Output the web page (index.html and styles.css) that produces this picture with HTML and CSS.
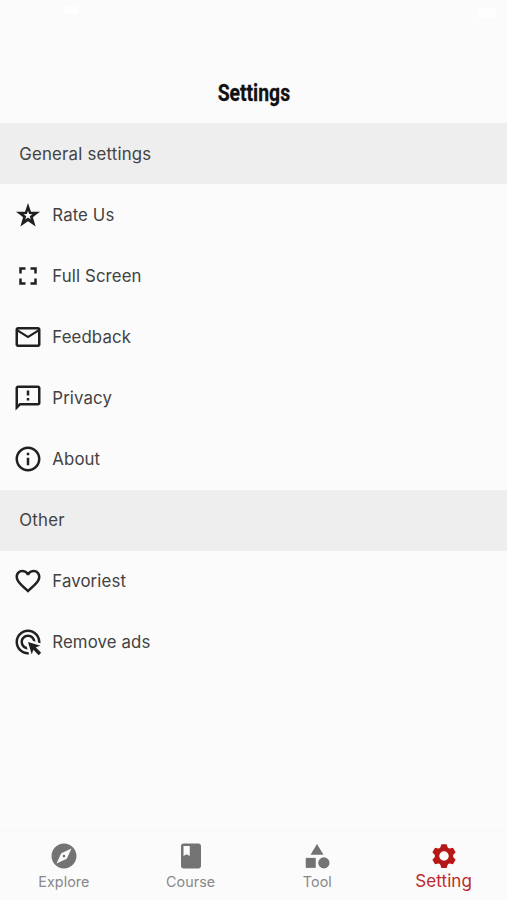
FILE: index.html
```html
<!DOCTYPE html>
<html lang="en">
<head>
<meta charset="utf-8">
<title>Settings</title>
<link rel="stylesheet" href="styles.css">
</head>
<body>
<div class="screen">
  <header class="header">
    <div class="status"><i class="status-mark"></i><i class="status-mark battery"></i></div>
    <h1 class="title">Settings</h1>
  </header>
  <main class="list">
    <h2 class="section">General settings</h2>
    <a class="row"><svg class="icon" viewBox="0 0 24 24"><path fill-rule="evenodd" d="M12 2.300L14.400 9.300 21.600 9.400 15.900 13.800 18.100 21.100 12 16.900 5.900 21.100 8.100 13.800 2.400 9.400 9.600 9.300zM12 8.600L12.900 11.200 15.500 11.300 13.400 12.900 14.200 15.500 12 14 9.800 15.500 10.600 12.900 8.500 11.300 11.100 11.200z"/></svg><span>Rate Us</span></a>
    <a class="row"><svg class="icon" viewBox="0 0 24 24"><path d="M7 14H5v5h5v-2H7v-3zm-2-4h2V7h3V5H5v5zm12 7h-3v2h5v-5h-2v3zM14 5v2h3v3h2V5h-5z"/></svg><span>Full Screen</span></a>
    <a class="row"><svg class="icon" viewBox="0 0 24 24"><path d="M22 6c0-1.100-.9-2-2-2H4c-1.100 0-2 .9-2 2v12c0 1.100.9 2 2 2h16c1.100 0 2-.9 2-2V6zm-2 0l-8 5-8-5h16zm0 12H4V8l8 5 8-5v10z"/></svg><span>Feedback</span></a>
    <a class="row"><svg class="icon" viewBox="0 0 24 24"><path d="M20 2H4c-1.100 0-1.990.9-1.990 2L2 22l4-4h14c1.100 0 2-.9 2-2V4c0-1.100-.9-2-2-2zm0 14H5.170L4 17.170V4h16v12zm-9-4h2v2h-2zm0-6h2v4h-2z"/></svg><span>Privacy</span></a>
    <a class="row"><svg class="icon" viewBox="0 0 24 24"><path d="M11 7h2v2h-2zm0 4h2v6h-2zm1-9C6.480 2 2 6.480 2 12s4.480 10 10 10 10-4.480 10-10S17.520 2 12 2zm0 18c-4.410 0-8-3.590-8-8s3.590-8 8-8 8 3.590 8 8-3.590 8-8 8z"/></svg><span>About</span></a>
    <h2 class="section">Other</h2>
    <a class="row"><svg class="icon" viewBox="0 0 24 24"><path d="M16.500 3c-1.740 0-3.410.81-4.500 2.090C10.910 3.810 9.240 3 7.500 3 4.420 3 2 5.420 2 8.500c0 3.780 3.400 6.860 8.550 11.540L12 21.350l1.450-1.320C18.600 15.360 22 12.280 22 8.500 22 5.420 19.580 3 16.500 3zm-4.400 15.550l-.1.100-.1-.1C7.140 14.240 4 11.390 4 8.500 4 6.500 5.500 5 7.500 5c1.540 0 3.040.99 3.570 2.360h1.870C13.460 5.990 14.960 5 16.500 5c2 0 3.500 1.500 3.500 3.500 0 2.890-3.140 5.740-7.900 10.050z"/></svg><span>Favoriest</span></a>
    <a class="row"><svg class="icon" viewBox="0 0 24 24"><path d="M11.710 17.990C8.530 17.840 6 15.220 6 12c0-3.310 2.690-6 6-6 3.220 0 5.840 2.530 5.990 5.710l-2.100-.63C15.480 9.310 13.890 8 12 8c-2.210 0-4 1.790-4 4 0 1.890 1.310 3.480 3.080 3.890l.63 2.100zM22 12c0 .3-.01.6-.04.9l-1.970-.59C20 12.210 20 12.100 20 12c0-4.420-3.580-8-8-8s-8 3.580-8 8 3.580 8 8 8c.1 0 .21 0 .31-.01l.59 1.970c-.3.030-.6.040-.9.040-5.520 0-10-4.480-10-10S6.480 2 12 2s10 4.480 10 10zm-3.770 4.260L22 15l-10-3 3 10 1.260-3.770 4.270 4.270 1.980-1.980-4.280-4.260z"/></svg><span>Remove ads</span></a>
  </main>
  <nav class="tabs">
    <a class="tab"><svg class="icon" viewBox="0 0 24 24"><path d="M12 10.900c-.61 0-1.100.49-1.100 1.100s.49 1.100 1.100 1.100c.61 0 1.100-.49 1.100-1.100s-.49-1.100-1.100-1.100zM12 2C6.480 2 2 6.480 2 12s4.480 10 10 10 10-4.480 10-10S17.520 2 12 2zm2.190 12.190L6 18l3.810-8.190L18 6l-3.810 8.190z"/></svg><span>Explore</span></a>
    <a class="tab"><svg class="icon" viewBox="0 0 24 24"><path d="M18 2H6c-1.100 0-2 .9-2 2v16c0 1.100.9 2 2 2h12c1.100 0 2-.9 2-2V4c0-1.100-.9-2-2-2zM6 4h5v8l-2.500-1.500L6 12V4z"/></svg><span>Course</span></a>
    <a class="tab"><svg class="icon" viewBox="0 0 24 24"><path d="M12 2.400l-5.200 8.500h10.400z"/><circle cx="17.500" cy="17.500" r="4.500"/><path d="M3 13.500h8v8H3z"/></svg><span>Tool</span></a>
    <a class="tab active"><svg class="icon" viewBox="0 0 24 24"><circle class="gear-ring" cx="12" cy="12" r="5.600"/><path id="tooth" d="M8.800 6L9.900 2.500h4.200L15.200 6z"/><use href="#tooth" transform="rotate(60 12 12)"/><use href="#tooth" transform="rotate(120 12 12)"/><use href="#tooth" transform="rotate(180 12 12)"/><use href="#tooth" transform="rotate(240 12 12)"/><use href="#tooth" transform="rotate(300 12 12)"/></svg><span>Setting</span></a>
  </nav>
</div>
</body>
</html>
```
FILE: styles.css
```css
* { box-sizing: border-box; }
body { margin: 0; background: #fbfbfb; font-family: Inter, "Liberation Sans", sans-serif; color: #424242; }
.screen { height: 900px; display: flex; flex-direction: column; overflow: hidden; }
.header { height: 123px; display: flex; flex-direction: column; align-items: center; }
.status { width: 100%; height: 63px; padding: 5px 11px 0 64px; display: flex; justify-content: space-between; }
.status-mark { width: 15px; height: 9px; border-radius: 3px; background: #fefefe; }
.battery { margin-top: 3px; width: 17px; height: 10px; }
.title { margin: 0; font: 700 24.5px/60px Roboto, sans-serif; color: #111; transform: scaleX(.79); -webkit-text-stroke: .3px #111; white-space: nowrap; }
.list { flex: 1; }
.section, .row { height: 61.1px; display: flex; align-items: center; font-size: 16.8px; font-weight: 400; letter-spacing: .12px; }
.section { margin: 0; padding-left: 19.300px; background: #eee; letter-spacing: .2px; }
.row { padding-left: 13px; gap: 9.300px; }
.icon { width: 30px; height: 30px; flex: none; fill: #202020; }
.tabs { height: 70px; border-top: 1px solid #f7f7f7; display: grid; grid-template-columns: repeat(4, 1fr); }
.tab { display: flex; flex-direction: column; align-items: center; padding: 10px 0 0 1px; font-size: 14.3px; line-height: 22px; letter-spacing: .1px; color: #888; }
.tab .icon { fill: #737373; }
.active { padding-left: 0; font-size: 17px; color: #bd2929; }
.active .icon { fill: #b71717; }
.active span { margin-top: -1px; }
.active .gear-ring { fill: none; stroke: #b71717; stroke-width: 3.600; }
```
